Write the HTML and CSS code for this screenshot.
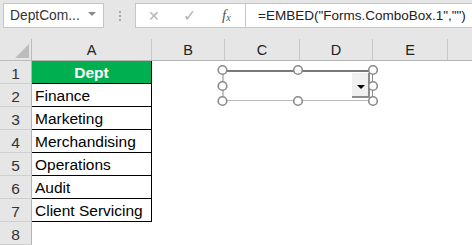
FILE: index.html
```html
<!DOCTYPE html>
<html>
<head>
<meta charset="utf-8">
<link rel="stylesheet" href="styles.css">
</head>
<body>
<div class="toolbar">
  <div class="namebox"><span>DeptCom...</span><span class="nb-arrow"></span></div>
  <div class="grip"><i></i><i></i><i></i></div>
  <div class="fx-icons">
    <span class="ico cancel">&#x2715;</span>
    <span class="ico enter">&#x2713;</span>
    <span class="ico fx">f<sub>x</sub></span>
  </div>
  <div class="formula">=EMBED("Forms.ComboBox.1","")</div>
</div>
<div class="sheet">
  <div class="corner"><span class="tri"></span></div>
  <div class="colh">A</div><div class="colh">B</div><div class="colh">C</div><div class="colh">D</div><div class="colh">E</div><div class="colh last"></div>

  <div class="rowh">1</div><div class="cell tbl head">Dept</div><div class="cell span"></div>
  <div class="rowh">2</div><div class="cell tbl">Finance</div><div class="cell span"></div>
  <div class="rowh">3</div><div class="cell tbl">Marketing</div><div class="cell span"></div>
  <div class="rowh">4</div><div class="cell tbl">Merchandising</div><div class="cell span"></div>
  <div class="rowh">5</div><div class="cell tbl">Operations</div><div class="cell span"></div>
  <div class="rowh">6</div><div class="cell tbl">Audit</div><div class="cell span"></div>
  <div class="rowh">7</div><div class="cell tbl">Client Servicing</div><div class="cell span"></div>
  <div class="rowh">8</div><div class="cell"></div><div class="cell span"></div>

  <svg class="combo" width="170" height="46" viewBox="0 0 170 46">
    <rect x="6.5" y="6" width="150.5" height="31" fill="#fff"/>
    <line x1="6.5" y1="7" x2="157" y2="7" stroke="#7a7a7a" stroke-width="2"/>
    <line x1="6.5" y1="36.5" x2="157" y2="36.5" stroke="#b8b8b8" stroke-width="1"/>
    <line x1="7" y1="6" x2="7" y2="37" stroke="#8a8a8a" stroke-width="1"/>
    <line x1="156.5" y1="6" x2="156.5" y2="37" stroke="#8a8a8a" stroke-width="1"/>
    <rect x="136" y="9" width="18" height="25" fill="#f0f0f0"/>
    <line x1="153" y1="9" x2="153" y2="34" stroke="#8c8c8c" stroke-width="2"/>
    <line x1="136" y1="33" x2="154" y2="33" stroke="#8c8c8c" stroke-width="2"/>
    <polygon points="141,21 149,21 145,25" fill="#000"/>
    <g fill="#fff" stroke="#8a8a8a" stroke-width="1.6">
      <circle cx="6.5" cy="6" r="4.3"/>
      <circle cx="82" cy="6" r="4.3"/>
      <circle cx="157" cy="6" r="4.3"/>
      <circle cx="6.5" cy="22" r="4.3"/>
      <circle cx="157" cy="22" r="4.3"/>
      <circle cx="6.5" cy="37" r="4.3"/>
      <circle cx="82" cy="37" r="4.3"/>
      <circle cx="157" cy="37" r="4.3"/>
    </g>
  </svg>
</div>
</body>
</html>
```
FILE: styles.css
```css
* { box-sizing: border-box; }
html, body { margin: 0; padding: 0; background: #fff; }
body {
  width: 472px;
  height: 245px;
  overflow: hidden;
  font-family: "Liberation Sans", Arial, sans-serif;
  color: #000;
}
.toolbar {
  height: 39px;
  background: #e6e6e6;
  display: flex;
  align-items: flex-start;
  padding: 3px 0 0 3px;
}
.namebox {
  width: 101px;
  height: 25px;
  background: #fff;
  border: 1px solid #c6c6c6;
  display: flex;
  align-items: center;
  justify-content: space-between;
  padding: 0 7px 0 6px;
  font-size: 13.8px;
  color: #333;
}
.nb-arrow {
  width: 0; height: 0;
  border-left: 4px solid transparent;
  border-right: 4px solid transparent;
  border-top: 4px solid #8a8a8a;
  margin-top: -3px;
}
.grip {
  width: 31px;
  height: 25px;
  display: flex;
  flex-direction: column;
  align-items: center;
  justify-content: center;
  gap: 2px;
}
.grip i {
  display: block;
  width: 2px; height: 2px;
  background: #a8a8a8;
}
.fx-icons {
  width: 110px;
  height: 25px;
  background: #fff;
  border: 1px solid #c6c6c6;
  border-right: none;
  display: flex;
  align-items: center;
  position: relative;
}
.ico { display: block; position: absolute; top: 2px; line-height: 20px; }
.cancel { left: 12px; font-size: 14px; color: #b4b4b4; }
.enter { left: 47px; font-size: 16px; color: #b4b4b4; }
.fx {
  left: 86px;
  font-family: "Liberation Serif", "Times New Roman", serif;
  font-style: italic;
  font-size: 15px;
  color: #555;
  top: 1px;
}
.fx sub { font-size: 10px; vertical-align: -1px; }
.formula {
  flex: 1;
  height: 25px;
  background: #fff;
  border: 1px solid #c6c6c6;
  border-right: none;
  margin-left: 0;
  padding-left: 12px;
  font-size: 13.5px;
  line-height: 23px;
  color: #222;
  white-space: nowrap;
}
.sheet {
  position: relative;
  display: grid;
  grid-template-columns: 32px 120px 73px 75px 73px 75px 24px;
  grid-template-rows: 22px repeat(8, 23px);
}
.corner {
  background: #e6e6e6;
  border-right: 1px solid #bcbcbc;
  border-bottom: 1px solid #bcbcbc;
  position: relative;
}
.tri {
  position: absolute;
  right: 2px; bottom: 2px;
  width: 0; height: 0;
  border-left: 14px solid transparent;
  border-bottom: 14px solid #bdbdbd;
}
.colh {
  background: #e6e6e6;
  border-right: 1px solid #c8c8c8;
  border-bottom: 1px solid #b5b5b5;
  text-align: center;
  font-size: 14.5px;
  line-height: 22px;
  color: #222;
}
.colh.last { border-right: none; }
.rowh {
  background: #e6e6e6;
  border-right: 1px solid #b5b5b5;
  border-bottom: 1px solid #cfcfcf;
  text-align: center;
  font-size: 15.5px;
  line-height: 23px;
  padding-top: 1px;
  color: #333;
}
.cell {
  font-size: 15.5px;
  line-height: 22px;
  padding: 1px 0 0 3px;
  white-space: nowrap;
}
.cell.span { grid-column: 3 / 8; }
.tbl {
  border-right: 1px solid #000;
  border-bottom: 1px solid #000;
}
.head {
  background: #00b050;
  color: #fff;
  font-weight: bold;
  text-align: center;
  padding-left: 0;
  border-bottom-color: #000;
}
.combo {
  position: absolute;
  left: 216px;
  top: 25px;
}
```
